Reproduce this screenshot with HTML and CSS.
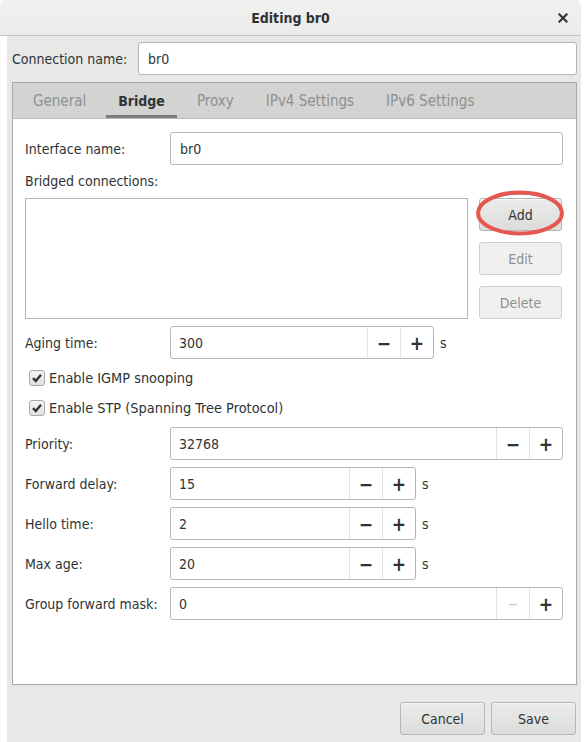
FILE: index.html
```html
<!DOCTYPE html>
<html>
<head>
<meta charset="utf-8">
<link rel="stylesheet" href="styles.css">
</head>
<body>
<div class="window">
  <div class="titlebar">
    <span class="title">Editing br0</span>
    <span class="close"><svg width="10" height="10" viewBox="0 0 10 10"><path d="M1.5 1.5 L8.5 8.5 M8.5 1.5 L1.5 8.5" stroke="#2e3436" stroke-width="2.2" stroke-linecap="square"/></svg></span>
  </div>
  <div class="content">
    <div class="conn-row">
      <span class="lbl">Connection name:</span>
      <div class="entry conn-entry">br0</div>
    </div>
    <div class="notebook">
      <div class="tabs">
        <span class="tab">General</span>
        <span class="tab active">Bridge</span>
        <span class="tab">Proxy</span>
        <span class="tab">IPv4 Settings</span>
        <span class="tab">IPv6 Settings</span>
      </div>
      <div class="page">
        <div class="row row-iface">
          <span class="lbl col-lbl">Interface name:</span>
          <div class="entry grow">br0</div>
        </div>
        <div class="lbl bridged-lbl">Bridged connections:</div>
        <div class="list-row">
          <div class="listbox"></div>
          <div class="list-btns">
            <div class="btn-wrap">
              <span class="btn">Add</span>
              <svg class="circle" width="92" height="52" viewBox="0 0 92 52"><ellipse cx="46" cy="25" rx="41" ry="20" fill="none" stroke="#3a3a3a" stroke-width="1" opacity="0.6"/><ellipse cx="46" cy="24" rx="42" ry="20.5" fill="none" stroke="#e8574f" stroke-width="4"/></svg>
            </div>
            <span class="btn disabled">Edit</span>
            <span class="btn disabled">Delete</span>
          </div>
        </div>
        <div class="row row-aging">
          <span class="lbl col-lbl">Aging time:</span>
          <div class="spin spin-aging">
            <span class="spin-val">300</span>
            <span class="spin-btn">&#x2212;</span>
            <span class="spin-btn">+</span>
          </div>
          <span class="unit">s</span>
        </div>
        <div class="check-row check-first">
          <span class="checkbox"><svg width="12" height="12" viewBox="0 0 12 12"><path d="M2 6.2 L4.8 9 L10 2.8" fill="none" stroke="#2e3436" stroke-width="2.4"/></svg></span>
          <span class="lbl check-lbl">Enable IGMP snooping</span>
        </div>
        <div class="check-row">
          <span class="checkbox"><svg width="12" height="12" viewBox="0 0 12 12"><path d="M2 6.2 L4.8 9 L10 2.8" fill="none" stroke="#2e3436" stroke-width="2.4"/></svg></span>
          <span class="lbl check-lbl">Enable STP (Spanning Tree Protocol)</span>
        </div>
        <div class="row row-spin row-priority">
          <span class="lbl col-lbl">Priority:</span>
          <div class="spin grow">
            <span class="spin-val">32768</span>
            <span class="spin-btn">&#x2212;</span>
            <span class="spin-btn">+</span>
          </div>
        </div>
        <div class="row row-spin">
          <span class="lbl col-lbl">Forward delay:</span>
          <div class="spin spin-short">
            <span class="spin-val">15</span>
            <span class="spin-btn">&#x2212;</span>
            <span class="spin-btn">+</span>
          </div>
          <span class="unit">s</span>
        </div>
        <div class="row row-spin">
          <span class="lbl col-lbl">Hello time:</span>
          <div class="spin spin-short">
            <span class="spin-val">2</span>
            <span class="spin-btn">&#x2212;</span>
            <span class="spin-btn">+</span>
          </div>
          <span class="unit">s</span>
        </div>
        <div class="row row-spin">
          <span class="lbl col-lbl">Max age:</span>
          <div class="spin spin-short">
            <span class="spin-val">20</span>
            <span class="spin-btn">&#x2212;</span>
            <span class="spin-btn">+</span>
          </div>
          <span class="unit">s</span>
        </div>
        <div class="row row-spin">
          <span class="lbl col-lbl">Group forward mask:</span>
          <div class="spin grow">
            <span class="spin-val">0</span>
            <span class="spin-btn spin-disabled">&#x2212;</span>
            <span class="spin-btn">+</span>
          </div>
        </div>
      </div>
    </div>
    <div class="actions">
      <span class="btn action-btn">Cancel</span>
      <span class="btn action-btn">Save</span>
    </div>
  </div>
</div>
</body>
</html>
```
FILE: styles.css
```css
* { box-sizing: border-box; }
html, body { margin: 0; padding: 0; background: #ffffff; }
body {
  font-family: "DejaVu Sans Condensed", "DejaVu Sans", sans-serif;
  font-size: 14px;
  color: #2e3436;
  width: 588px;
  height: 742px;
  overflow: hidden;
}
.window { width: 581px; }
.titlebar {
  height: 36px;
  background: linear-gradient(#f1f1f0, #ebebea);
  border-bottom: 1px solid #c4c4c1;
  border-top-left-radius: 6px;
  border-top-right-radius: 6px;
  display: flex;
  align-items: center;
  justify-content: center;
  position: relative;
}
.title { font-weight: bold; color: #2e3436; }
.close {
  position: absolute;
  right: 13px;
  top: 13px;
  width: 10px;
  height: 10px;
  display: flex;
}
.content {
  margin-left: 7px;
  background: #e8e8e7;
  padding: 6px 4px 7px 5px;
  height: 706px;
}
.lbl { white-space: nowrap; }
.conn-row { display: flex; align-items: center; height: 33px; }
.entry {
  height: 33px;
  border: 1px solid #b6b6b3;
  border-radius: 3px;
  background: #ffffff;
  display: flex;
  align-items: center;
  padding-left: 9px;
}
.conn-entry { margin-left: auto; width: 439px; }
.notebook {
  margin-top: 7px;
  height: 603px;
  border: 1px solid #a9a9a6;
  background: #ffffff;
  display: flex;
  flex-direction: column;
}
.tabs {
  height: 36px;
  background: #d3d3d1;
  border-bottom: 1px solid #b9b9b6;
  display: flex;
  padding-left: 8px;
}
.tab {
  padding: 0 12px;
  margin-right: 8px;
  display: flex;
  align-items: center;
  color: #8d9091;
  font-size: 15px;
  border-bottom: 3px solid transparent;
  padding-top: 3px;
}
.tab.active {
  color: #2e3436;
  font-weight: bold;
  font-size: 14px;
  border-bottom-color: #7b7e80;
}
.page {
  flex: 1;
  padding: 13px 13px 0 12px;
  display: flex;
  flex-direction: column;
}
.row { display: flex; align-items: center; height: 33px; }
.col-lbl { width: 145px; flex: none; }
.grow { flex: 1; }
.bridged-lbl { margin-top: 8px; line-height: 17px; }
.list-row { display: flex; margin-top: 8px; gap: 11px; }
.listbox {
  width: 443px;
  height: 121px;
  border: 1px solid #b6b6b3;
  background: #ffffff;
}
.list-btns { width: 83px; display: flex; flex-direction: column; gap: 11px; }
.btn-wrap { position: relative; display: flex; }
.btn {
  height: 33px;
  width: 100%;
  display: flex;
  align-items: center;
  justify-content: center;
  border: 1px solid #b6b6b3;
  border-radius: 3px;
  background: linear-gradient(#ebebea, #dcdcda);
  color: #2e3436;
  box-shadow: inset 0 1px #f6f6f5;
}
.btn.disabled {
  background: #f0f0ef;
  border-color: #cfcfcc;
  color: #8d9091;
  box-shadow: none;
}
.circle { position: absolute; left: -5px; top: -9px; }
.row-aging { margin-top: 7px; }
.spin {
  height: 33px;
  display: flex;
  border: 1px solid #b6b6b3;
  border-radius: 3px;
  background: #ffffff;
}
.spin-aging { width: 264px; flex: none; }
.spin-short { width: 246px; flex: none; }
.spin-val { flex: 1; display: flex; align-items: center; padding-left: 8px; }
.spin-btn {
  width: 33px;
  flex: none;
  border-left: 1px solid #e2e2e0;
  display: flex;
  align-items: center;
  justify-content: center;
  font-size: 19px;
  font-weight: bold;
  color: #2e3436;
}
.spin-disabled { color: #c8c8c6; font-weight: normal; font-size: 14px; }
.unit { margin-left: 6px; }
.check-row { display: flex; align-items: center; height: 30px; padding-left: 4px; gap: 4px; }
.check-lbl { font-size: 14.4px; }
.check-first { margin-top: 4px; }
.checkbox {
  width: 16px;
  height: 16px;
  border: 1px solid #a9a9a6;
  border-radius: 3px;
  background: linear-gradient(#f4f4f3, #e0e0de);
  display: flex;
  align-items: center;
  justify-content: center;
}
.row-priority { margin-top: 4px; }
.row-spin + .row-spin { margin-top: 7px; }
.actions {
  display: flex;
  justify-content: flex-end;
  gap: 6px;
  margin-top: 17px;
  padding-right: 1px;
}
.action-btn { width: 85px; }
```
